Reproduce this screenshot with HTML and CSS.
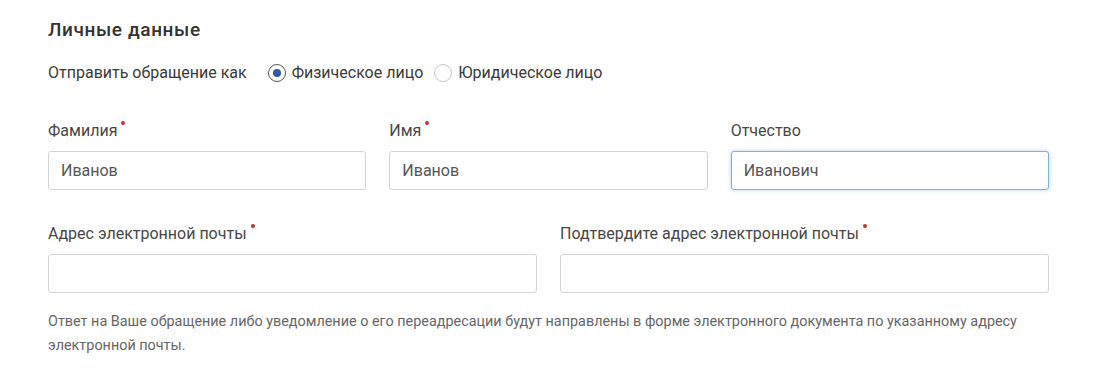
FILE: index.html
```html
<!DOCTYPE html>
<html lang="ru">
<head>
    <meta charset="UTF-8">
    <title>Личные данные</title>
    <link rel="stylesheet" href="styles.css">
</head>
<body>
    <section class="personal">
        <h2 class="personal-title">Личные данные</h2>

        <div class="sender-type">
            <span class="sender-caption">Отправить обращение как</span>
            <label class="radio">
                <input type="radio" name="sender" checked>
                <span class="radio-mark"></span>
                Физическое лицо
            </label>
            <label class="radio">
                <input type="radio" name="sender">
                <span class="radio-mark"></span>
                Юридическое лицо
            </label>
        </div>

        <div class="form-row form-row-3">
            <div class="field">
                <label class="field-label">Фамилия<span class="required"></span></label>
                <input class="field-input" type="text" value="Иванов">
            </div>
            <div class="field">
                <label class="field-label">Имя<span class="required"></span></label>
                <input class="field-input" type="text" value="Иванов">
            </div>
            <div class="field">
                <label class="field-label">Отчество</label>
                <input class="field-input field-input-focus" id="middleName" type="text" value="Иванович">
            </div>
        </div>

        <div class="form-row form-row-2">
            <div class="field">
                <label class="field-label">Адрес электронной почты<span class="required"></span></label>
                <input class="field-input" type="email">
            </div>
            <div class="field">
                <label class="field-label">Подтвердите адрес электронной почты<span class="required"></span></label>
                <input class="field-input" type="email">
            </div>
        </div>

        <p class="hint">
            Ответ на Ваше обращение либо уведомление о его переадресации будут направлены в форме электронного документа по указанному адресу электронной почты.
        </p>
    </section>

    <script>
        // курсор в конце поля "Отчество"
        const middleName = document.getElementById('middleName');
        middleName.focus();
        middleName.setSelectionRange(middleName.value.length, middleName.value.length);
    </script>
</body>
</html>
```

FILE: styles.css
```css
* {
    margin: 0;
    padding: 0;
    box-sizing: border-box;
}

body {
    font-family: Roboto, "Noto Sans", sans-serif;
    background: #fff;
    color: #333;
}

.personal {
    width: 1050px;
    padding: 19px 0 0 48px;
}

.personal-title {
    font-size: 19px;
    font-weight: 500;
    line-height: 22px;
    color: #333;
    margin-bottom: 22px;
    letter-spacing: 0.6px;
}

.sender-type {
    display: flex;
    align-items: center;
    font-size: 16px;
    line-height: 20px;
    color: #3a3a3a;
    margin-bottom: 38px;
}

.sender-caption {
    margin-right: 21px;
}

.radio {
    display: inline-flex;
    align-items: center;
    cursor: pointer;
    margin-right: 11px;
}

.radio input {
    display: none;
}

.radio-mark {
    width: 18px;
    height: 18px;
    border: 1px solid #c8c8c8;
    border-radius: 50%;
    margin-right: 6px;
    display: inline-flex;
    align-items: center;
    justify-content: center;
}

.radio input:checked + .radio-mark {
    border-color: #555;
}

.radio input:checked + .radio-mark::after {
    content: "";
    width: 8px;
    height: 8px;
    border-radius: 50%;
    background: #2d5aa0;
}

.form-row {
    display: grid;
    gap: 23px;
    width: 1001px;
}

.form-row-3 {
    grid-template-columns: repeat(3, 1fr);
    margin-bottom: 34px;
}

.form-row-2 {
    grid-template-columns: repeat(2, 1fr);
    margin-bottom: 17px;
}

.field-label {
    display: block;
    font-size: 16px;
    line-height: 20px;
    color: #474747;
    margin-bottom: 10px;
}

.required {
    display: inline-block;
    width: 4px;
    height: 4px;
    border-radius: 50%;
    background: #b5392c;
    vertical-align: top;
    margin: 0 0 0 4px;
}

.field-input {
    display: block;
    width: 100%;
    height: 39px;
    border: 1px solid #d4d4d4;
    border-radius: 3px;
    padding: 0 12px;
    font-family: inherit;
    font-size: 16px;
    color: #555;
    background: #fff;
    outline: none;
}

.field-input-focus {
    border-color: #7fb1dc;
    box-shadow: 0 0 4px rgba(102, 160, 215, 0.45);
    caret-color: #333;
}

.hint {
    font-size: 14.4px;
    line-height: 24px;
    color: #666;
    width: 1001px;
}
```
